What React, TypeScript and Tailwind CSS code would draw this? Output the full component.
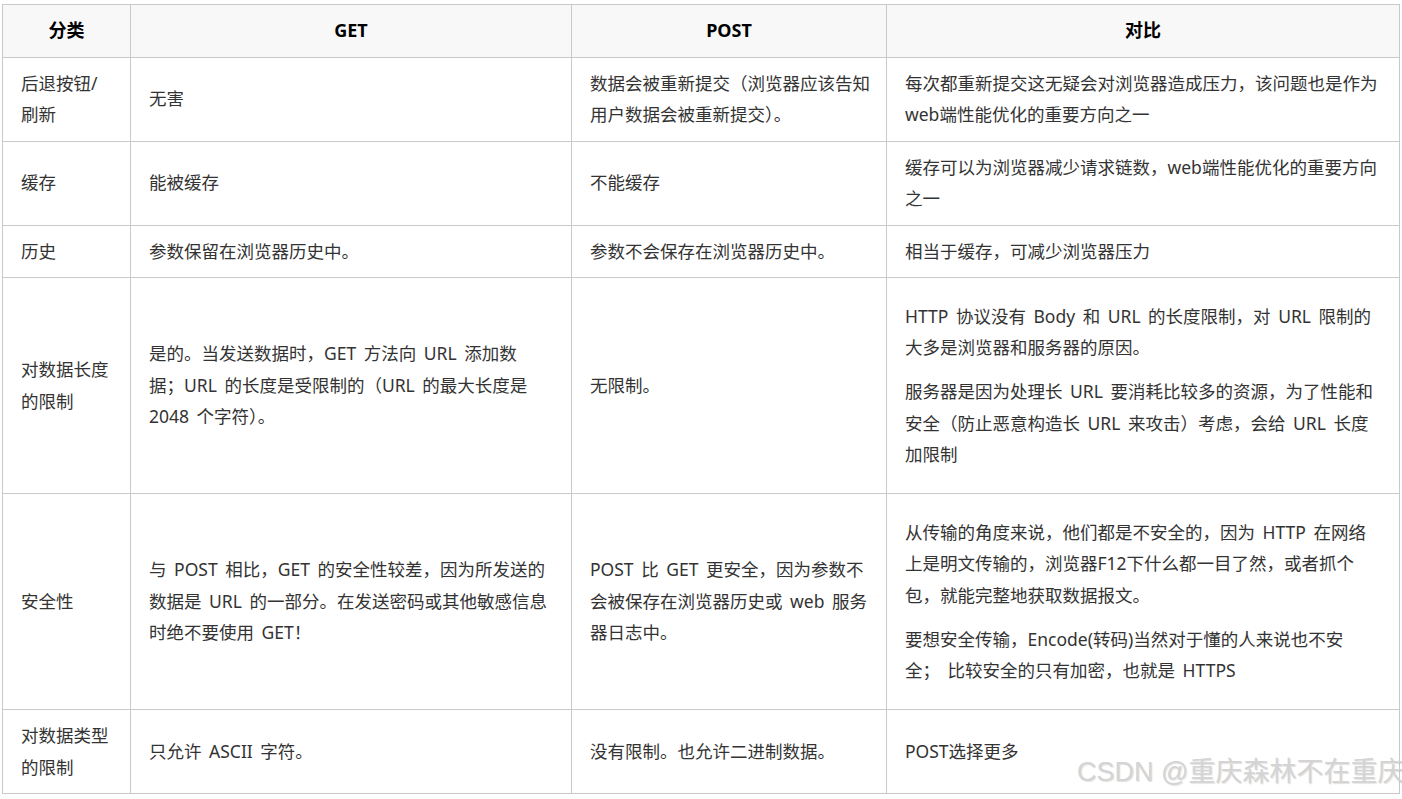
import React from "react";

type Row = {
  cat: string[];
  get: string[];
  post: string[];
  cmp: string[][];
};

const rows: Row[] = [
  {
    cat: ["后退按钮/", "刷新"],
    get: ["无害"],
    post: ["数据会被重新提交（浏览器应该告知", "用户数据会被重新提交）。"],
    cmp: [["每次都重新提交这无疑会对浏览器造成压力，该问题也是作为", "web端性能优化的重要方向之一"]],
  },
  {
    cat: ["缓存"],
    get: ["能被缓存"],
    post: ["不能缓存"],
    cmp: [["缓存可以为浏览器减少请求链数，web端性能优化的重要方向", "之一"]],
  },
  {
    cat: ["历史"],
    get: ["参数保留在浏览器历史中。"],
    post: ["参数不会保存在浏览器历史中。"],
    cmp: [["相当于缓存，可减少浏览器压力"]],
  },
  {
    cat: ["对数据长度", "的限制"],
    get: [
      "是的。当发送数据时，GET 方法向 URL 添加数",
      "据；URL 的长度是受限制的（URL 的最大长度是",
      "2048 个字符）。",
    ],
    post: ["无限制。"],
    cmp: [
      ["HTTP 协议没有 Body 和 URL 的长度限制，对 URL 限制的", "大多是浏览器和服务器的原因。"],
      [
        "服务器是因为处理长 URL 要消耗比较多的资源，为了性能和",
        "安全（防止恶意构造长 URL 来攻击）考虑，会给 URL 长度",
        "加限制",
      ],
    ],
  },
  {
    cat: ["安全性"],
    get: [
      "与 POST 相比，GET 的安全性较差，因为所发送的",
      "数据是 URL 的一部分。在发送密码或其他敏感信息",
      "时绝不要使用 GET！",
    ],
    post: ["POST 比 GET 更安全，因为参数不", "会被保存在浏览器历史或 web 服务", "器日志中。"],
    cmp: [
      [
        "从传输的角度来说，他们都是不安全的，因为 HTTP 在网络",
        "上是明文传输的，浏览器F12下什么都一目了然，或者抓个",
        "包，就能完整地获取数据报文。",
      ],
      ["要想安全传输，Encode(转码)当然对于懂的人来说也不安", "全； 比较安全的只有加密，也就是 HTTPS"],
    ],
  },
  {
    cat: ["对数据类型", "的限制"],
    get: ["只允许 ASCII 字符。"],
    post: ["没有限制。也允许二进制数据。"],
    cmp: [["POST选择更多"]],
  },
];

function Lines({ lines }: { lines: string[] }) {
  return (
    <>
      {lines.map((l, i) => (
        <React.Fragment key={i}>
          {i > 0 && <br />}
          {l}
        </React.Fragment>
      ))}
    </>
  );
}

const cell = "border border-[#c9c9c9] px-[18px] py-[10px] align-middle whitespace-nowrap";
const head = "border border-[#c9c9c9] px-[18px] py-[10px] text-center text-[18px] font-bold text-black";

export default function App() {
  return (
    <div
      className="relative w-[1402px] h-[799px] overflow-hidden bg-white pt-[4px] pl-[2px]"
      style={{ fontFamily: '"Noto Sans", "Noto Sans CJK SC", sans-serif' }}
    >
      <table className="border-collapse table-fixed w-[1397px] text-[17.5px] leading-[31.5px] text-[#333] [word-spacing:3px]">
        <colgroup>
          <col className="w-[128px]" />
          <col className="w-[441px]" />
          <col className="w-[315px]" />
          <col className="w-[513px]" />
        </colgroup>
        <thead>
          <tr className="bg-[#f8f8f8]">
            <th className={head}>分类</th>
            <th className={head}>GET</th>
            <th className={head}>POST</th>
            <th className={head}>对比</th>
          </tr>
        </thead>
        <tbody>
          {rows.map((r, i) => (
            <tr key={i}>
              <td className={cell}>
                <Lines lines={r.cat} />
              </td>
              <td className={cell}>
                <Lines lines={r.get} />
              </td>
              <td className={cell}>
                <Lines lines={r.post} />
              </td>
              <td className={cell}>
                {r.cmp.length > 1 ? (
                  r.cmp.map((p, j) => (
                    <p key={j} className="my-[12.5px]">
                      <Lines lines={p} />
                    </p>
                  ))
                ) : (
                  <Lines lines={r.cmp[0]} />
                )}
              </td>
            </tr>
          ))}
        </tbody>
      </table>

      {/* watermark */}
      <div
        className="absolute left-[1077px] top-[755px] whitespace-nowrap text-[27px] leading-[34px] text-[#d4d4d4] [text-shadow:1px_1px_1px_rgba(0,0,0,0.12)]"
        style={{ fontFamily: '"Liberation Sans", "Noto Sans CJK SC", sans-serif' }}
      >
        CSDN @重庆森林不在重庆
      </div>
    </div>
  );
}
